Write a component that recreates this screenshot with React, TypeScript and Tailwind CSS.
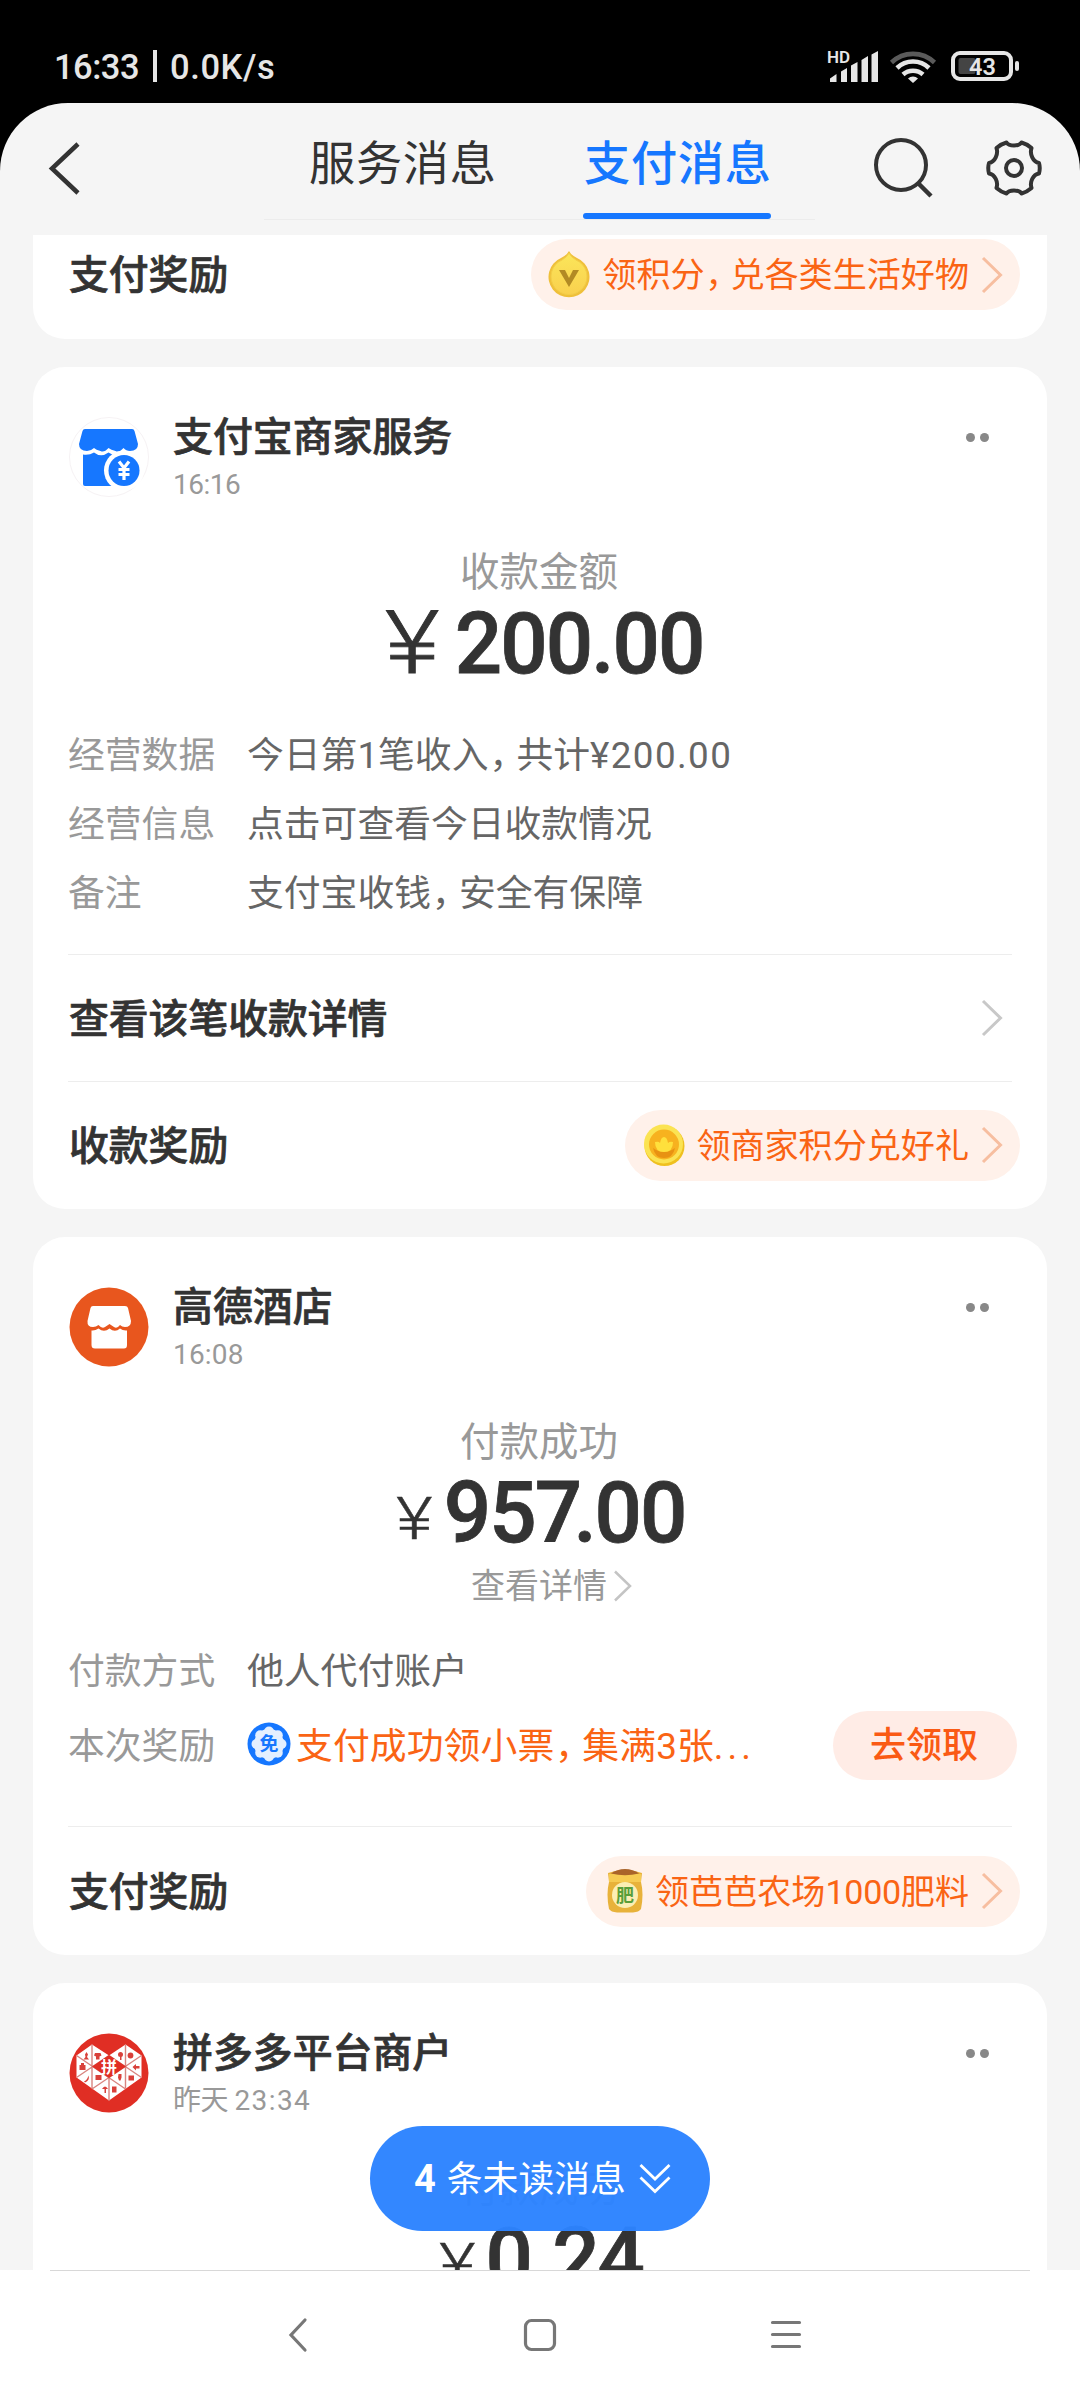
import type { ReactNode } from 'react'

// 全角逗号收窄一点
const Comma = () => <span className="pl-[0.02em] pr-[0.24em] [font-feature-settings:'halt']">，</span>

function StatusBar() {
  return (
    <div className="flex h-[103px] items-start justify-between bg-black pl-[54px] pr-[60px] text-[#e6e6e6]">
      <div className="mt-[47px] flex h-[40px] items-center text-[34.500px] font-medium leading-[40px]">
        <span className="w-[84px] tracking-[-0.500px]">16:33</span>
        <span className="-mt-[2px] ml-[15px] h-[32px] w-[4px] bg-[#e6e6e6]" />
        <span className="ml-[13px] tracking-[0.6px]">0.0K/s</span>
      </div>
      <div className="mt-[48px] flex items-start">
        <svg width="52" height="36" viewBox="0 0 52 36" fill="#e6e6e6">
          <text x="0" y="15" fontSize="17" fontWeight="600">HD</text>
          <path d="M3 34V30.500L9.500 26v8zM14 34V23.500L20 20v14zM24 34V17.500L30.500 14v20zM34.500 34V12L41 8v26zM44.500 34V6.500L51 3v31z" />
        </svg>
        <svg className="ml-[10px]" width="48" height="36" viewBox="0 0 48 36" fill="none" strokeWidth="4.600">
          <path d="M2.500 14.500a31 31 0 0 1 43 0" stroke="#5a5a5a" />
          <path d="M8 20a23 23 0 0 1 32 0M14 26.500a15 15 0 0 1 20 0" stroke="#e6e6e6" />
          <path d="M19 30.500a7.500 7.500 0 0 1 10 0L24 35z" fill="#e6e6e6" />
        </svg>
        <svg className="ml-[13px]" width="70" height="36" viewBox="0 0 70 36" fill="none">
          <rect x="3" y="5" width="58" height="26" rx="7" stroke="#e6e6e6" strokeWidth="4" />
          <rect x="8.500" y="10" width="17" height="16" rx="2" fill="#444" />
          <rect x="65" y="13" width="4" height="10" rx="2" fill="#e6e6e6" />
          <text x="19" y="26.500" fontSize="23.500" fontWeight="600" fill="#e6e6e6">43</text>
        </svg>
      </div>
    </div>
  )
}

function Header() {
  return (
    <div className="flex h-[132px] shrink-0 items-start">
      <svg className="ml-[44px] mt-[35px]" width="40" height="60" viewBox="0 0 40 60" fill="none" stroke="#333" strokeWidth="4.500">
        <path d="M34 6L8 30.500L34 55" />
      </svg>
      <div className="ml-[180px] mt-px flex h-[116px] w-[551px] justify-between border-b border-[#ececec] pl-[38px] pr-[44px] text-[46.200px]">
        <div className="w-[204px] pl-[7px] pt-[30px] leading-[60px] tracking-[0.700px] text-[#333]">服务消息</div>
        <div className="flex h-[115px] w-[188px] flex-col justify-between whitespace-nowrap pt-[30px] font-medium leading-[60px] text-[#1677ff]">
          <div className="pl-[1px] tracking-[0.700px]">支付消息</div>
          <div className="h-[6px] rounded-full bg-[#1677ff]" />
        </div>
      </div>
      <svg className="ml-[55px] mt-[33px]" width="68" height="68" viewBox="0 0 68 68" fill="none" stroke="#333" strokeWidth="4">
        <circle cx="31" cy="29" r="25" />
        <path d="M48 47L61 60" strokeWidth="4.500" />
      </svg>
      <svg className="ml-[46px] mt-[35px]" width="60" height="60" viewBox="0 0 60 60" fill="none" stroke="#333" strokeWidth="4" strokeLinejoin="round">
        <circle cx="30" cy="30" r="8" />
        <path d="M22.500 4.500C25 8.500 35 8.500 37.500 4.500Q43 6 47.500 10C45.500 16 49 24 55 25Q56.500 30 55 35.500C49 36.500 45.500 44 47.500 50Q43 54 37.500 55.500C35 51.500 25 51.500 22.500 55.500Q17 54 12.500 50C14.500 44 11 36.500 5 35.500Q3.500 30 5 25C11 24 14.500 16 12.500 10Q17 6 22.500 4.500z" />
      </svg>
    </div>
  )
}

function Arrow({ color }: { color: string }) {
  return (
    <svg width="22" height="38" viewBox="0 0 22 38" fill="none" stroke={color} strokeWidth="3">
      <path d="M2 2L19.500 19L2 36" />
    </svg>
  )
}

function CoinV() {
  return (
    <svg width="44" height="50" viewBox="0 0 44 50">
      <defs>
        <linearGradient id="coin-v" x1="0" y1="0" x2="0" y2="1">
          <stop offset="0" stopColor="#fbe65a" />
          <stop offset="1" stopColor="#f9d04e" />
        </linearGradient>
      </defs>
      <path d="M22 1Q24 5 30 8a20.500 20.500 0 1 1-16 0Q20 5 22 1z" fill="#efc03a" />
      <path d="M22 3Q24 7 29 10a18 18 0 1 1-14 0Q20 7 22 3z" fill="url(#coin-v)" stroke="#f3cd48" strokeWidth="1" />
      <path d="M12 20h6l4 8 4-8h6L22 37z" fill="#b28a24" />
    </svg>
  )
}

function CoinIngot() {
  return (
    <svg width="42" height="46" viewBox="0 0 42 46">
      <circle cx="21.500" cy="24" r="20" fill="#efc01f" />
      <circle cx="20.500" cy="22" r="19.500" fill="#fbe352" />
      <circle cx="21" cy="22.500" r="15" fill="#f7b21f" />
      <path d="M10 26q11 8 22 0q-2 10-11 10t-11-10z" fill="#e89212" />
      <path d="M12 20q4-1 5 1q1-6 4-6t4 6q2-2 5-1q0 10-9 10t-9-10z" fill="#ffe03c" />
    </svg>
  )
}

function Fertilizer() {
  return (
    <svg className="mr-px" width="36" height="46" viewBox="0 0 36 46">
      <path d="M1 5Q18-1 35 5L34 14Q37 26 34 41Q32 44 26 44.500H10Q4 44 2 41Q-1 26 2 14z" fill="#e8b23a" />
      <path d="M2 6H34V14H2z" fill="#f6cb52" />
      <path d="M4 5.500Q10 1 18 1T32 5.500Q18 9 4 5.500z" fill="#a9642a" />
      <circle cx="18" cy="27" r="13" fill="#fbeeb4" />
      <text x="18" y="34" fontSize="18" fontWeight="700" fill="#5a9e3a" textAnchor="middle">肥</text>
    </svg>
  )
}

function FreeBadge() {
  return (
    <svg className="-mt-[3px] shrink-0" width="44" height="44" viewBox="0 0 44 44">
      <circle cx="22" cy="22" r="21.500" fill="#1677ff" />
      <g fill="#e3efff">
        <circle cx="22" cy="22" r="15" />
        <circle cx="22" cy="9.500" r="5" />
        <circle cx="30.800" cy="13.200" r="5" />
        <circle cx="34.500" cy="22" r="5" />
        <circle cx="30.800" cy="30.800" r="5" />
        <circle cx="22" cy="34.500" r="5" />
        <circle cx="13.200" cy="30.800" r="5" />
        <circle cx="9.500" cy="22" r="5" />
        <circle cx="13.200" cy="13.200" r="5" />
      </g>
      <text x="22" y="29" fontSize="19" fontWeight="700" fill="#1677ff" textAnchor="middle">免</text>
    </svg>
  )
}

function ShopAvatar() {
  return (
    <svg width="80" height="80" viewBox="1 0 80 80">
      <circle cx="41" cy="40" r="39.500" fill="#fff" stroke="#f6f2f4" />
      <path d="M17 12H64Q66 12 66.500 14L70 27Q70 34 62 34Q58 34 55.500 31Q51 36 47.500 34Q43 33 40.500 31Q36 36 32.500 34Q28 33 26 31Q23 34 19 34Q11 34 11 27L14.500 14Q15 12 17 12z" fill="#1677ff" />
      <path d="M15 37.500Q21 38.500 26 35.500Q33 41 40.500 35.500Q47 40 52 37V69H17Q15 69 15 67z" fill="#1677ff" />
      <circle cx="56" cy="53.500" r="20" fill="#fff" />
      <circle cx="56" cy="53.500" r="15.500" fill="#1677ff" />
      <path d="M51 44.500L56 51L61 44.500M56 51V63M50.500 52.500H61.500M50.500 57.500H61.500" fill="none" stroke="#fff" strokeWidth="3.200" />
    </svg>
  )
}

function HotelAvatar() {
  return (
    <svg width="80" height="80" viewBox="0 0 80 80">
      <circle cx="40" cy="40" r="39.500" fill="#e8561e" />
      <path d="M24 19H56Q58.500 19 59 21L62 34Q62 40 56 40Q53 40 51 38Q48 42 45 40L40.500 37L36 40Q33 42 29.500 38Q27 40 24 40Q18 40 18.500 34L21.500 21Q22 19 24 19z" fill="#fff" />
      <path d="M22.500 43.500Q26 44 29.500 41.500Q35 46 40.500 41.500Q46 46 51 41.500Q54 44 58 43.500V58Q58 61.500 55 61.500H26Q22.500 61.500 22.500 58z" fill="#fff" />
    </svg>
  )
}

function PddAvatar() {
  return (
    <svg width="80" height="80" viewBox="0 0 80 80">
      <circle cx="40" cy="40" r="39.500" fill="#e02e24" />
      <path d="M7.500 22.500L23 11.500L40 22.500L56.500 11.500L72.500 22.500V44.500L40 67.500L7.500 44.500z" fill="#fff" />
      <path d="M23 11.500V55.500M56.500 11.500V55.500M40 44.500V67.500M7.500 22.500L56.500 56M72.500 22.500L23 56M7.500 44.500L40 22.500M72.500 44.500L40 22.500" fill="none" stroke="#d98580" strokeWidth="1.400" />
      <path d="M40 22L57 33.500L40 45L23 33.500z" fill="#e02e24" />
      <text x="40" y="39.500" fontSize="16" fontWeight="700" fill="#fff" textAnchor="middle">拼</text>
      {/* 小商品图案 */}
      <g fill="#d9403a">
        <path d="M17.500 19l1.500 2.500-1 2.500 2 2.500h-5.500l2-2.500-.5-2.500zM26 20h5.500l1 2.500-2 1v3h-3.500v-3l-2-1z" />
        <path d="M10.500 32h6v5h-6zM12 30h3v3h-3zM26.500 42h6v5h-6z" />
        <path d="M15 48.500q3-1 4.500-6q1.500 5-3.500 7zM33 56q3-5 6 0zM35.500 55h1.500v5h-1.500z" />
        <circle cx="51.500" cy="21.500" r="2.500" />
        <circle cx="61.500" cy="22.500" r="2.900" />
        <path d="M51 22h1.500v5H51zM63.500 34l3.500-3v2h3.500v2.500h-3.500v2zM49.500 41h3v3.500l-1 3h-1.500l-1-3zM59.500 42.500h5.500v5h-5.500zM43 53.500h4.500v6H43z" />
      </g>
    </svg>
  )
}

function RewardPill({ icon, children, width }: { icon: ReactNode; children: ReactNode; width: string }) {
  return (
    <div className={`-mr-2 flex h-[71px] items-center justify-end rounded-full bg-[#fff1ea] pr-[17px] ${width}`}>
      {icon}
      <span className="ml-[11px] mr-[12px] whitespace-nowrap pt-px text-[34.100px] leading-[48px] text-[#fa6414]">{children}</span>
      <Arrow color="#f7bea0" />
    </div>
  )
}

function RewardTitle({ children }: { children: ReactNode }) {
  return (
    <div className="pl-px pt-[3px] text-[39.800px] font-medium leading-[48px] text-[#333] [-webkit-text-stroke:0.7px_#333]">{children}</div>
  )
}

function CardHead({ avatar, name, time }: { avatar: ReactNode; name: string; time: ReactNode }) {
  return (
    <div className="flex h-[80px] pl-px">
      {avatar}
      <div className="ml-[24px] flex flex-1 flex-col">
        <div className="text-[39.900px] font-medium leading-[42px] text-[#333] [-webkit-text-stroke:0.7px_#333]">{name}</div>
        <div className="mt-[12px] text-[28px] leading-[28px] tracking-[-0.500px] text-[#999]">{time}</div>
      </div>
      <div className="mr-[23px] mt-[16px] flex gap-[5px]">
        <span className="size-[9px] rounded-full bg-[#888]" />
        <span className="size-[9px] rounded-full bg-[#888]" />
      </div>
    </div>
  )
}

function Amount({ label, value, big }: { label: string; value: ReactNode; big?: boolean }) {
  return (
    <>
      <div className="mt-[56px] pr-[2px] text-center text-[39.500px] leading-[40px] text-[#999]">{label}</div>
      <div className={`mt-[10px] flex h-[80px] items-baseline justify-center leading-[80px] text-[#333] ${big ? 'pl-[21px]' : 'pl-[8px]'}`}>
        {big ? (
          <span className="mr-[11px] origin-right scale-x-[1.2] text-[88px] font-light [-webkit-text-stroke:0.8px_#333]">¥</span>
        ) : (
          <span className="relative -top-[3px] mr-[10px] scale-x-[1.17] text-[60px] font-light [-webkit-text-stroke:0.500px_#333]">¥</span>
        )}
        <span className="scale-x-[0.97] text-[86px] font-medium tracking-[-2px] [-webkit-text-stroke:0.800px_#333]">{value}</span>
      </div>
    </>
  )
}

function Row({ label, children }: { label: string; children: ReactNode }) {
  return (
    <div className="flex h-[69px] items-center pt-[2px] text-[36.800px] leading-[40px]">
      <div className="w-[179px] text-[#999]">{label}</div>
      <div className="text-[#666]">{children}</div>
    </div>
  )
}

const Line = () => <div className="h-px bg-[#ededed]" />

export default function App() {
  return (
    <div className="h-[2400px] w-[1080px] overflow-hidden bg-black font-['Roboto','Noto_Sans_CJK_SC',sans-serif]">
      <StatusBar />
      <div className="relative flex h-[2167px] flex-col overflow-hidden rounded-t-[68px] bg-[#f5f5f5]">
        <Header />
        <div className="flex flex-1 flex-col gap-[28px] overflow-hidden px-[33px]">
          <div className="h-[104px] shrink-0 rounded-b-[32px] bg-white px-[35px]">
            <div className="flex h-[79px] items-center justify-between">
              <RewardTitle>支付奖励</RewardTitle>
              <RewardPill width="w-[489px]" icon={<CoinV />}>领积分<Comma />兑各类生活好物</RewardPill>
            </div>
          </div>

          <div className="h-[842px] shrink-0 rounded-[32px] bg-white px-[35px] pt-[50px]">
            <CardHead avatar={<ShopAvatar />} name="支付宝商家服务" time="16:16" />
            <Amount label="收款金额" value="200.00" big />
            <div className="mb-[27px] mt-[37px]">
              <Row label="经营数据">今日第1笔收入<Comma />共计<span className="tracking-[1.400px]">¥200.00</span></Row>
              <Row label="经营信息">点击可查看今日收款情况</Row>
              <Row label="备注">支付宝收钱<Comma />安全有保障</Row>
            </div>
            <Line />
            <div className="flex h-[126px] items-center justify-between pr-[9px]">
              <RewardTitle>查看该笔收款详情</RewardTitle>
              <Arrow color="#c8c8c8" />
            </div>
            <Line />
            <div className="flex h-[126px] items-center justify-between">
              <RewardTitle>收款奖励</RewardTitle>
              <RewardPill width="w-[395px]" icon={<CoinIngot />}>领商家积分兑好礼</RewardPill>
            </div>
          </div>

          <div className="h-[718px] shrink-0 rounded-[32px] bg-white px-[35px] pt-[50px]">
            <CardHead avatar={<HotelAvatar />} name="高德酒店" time={<span className="tracking-[0.2px]">16:08</span>} />
            <Amount label="付款成功" value={<>95<span className="tracking-[-9px]">7</span>.00</>} />
            <div className="mt-[13px] flex h-[40px] items-center justify-center gap-[6px] pl-[24px] text-[34px] leading-[40px] text-[#999]">
              查看详情
              <svg width="20" height="32" viewBox="0 0 20 32" fill="none" stroke="#c4c4c4" strokeWidth="2.500">
                <path d="M2 1.500L17 16L2 30.500" />
              </svg>
            </div>
            <div className="mb-[40px] mt-[30px]">
              <Row label="付款方式">他人代付账户</Row>
              <div className="flex h-[81px] items-center text-[36.800px] leading-[40px]">
                <div className="w-[179px] pt-[2px] text-[#999]">本次奖励</div>
                <FreeBadge />
                <div className="ml-[5px] flex-1 pt-[2px] tracking-[0.1px] text-[#fa6414]">
                  支付成功领小票<Comma />集满3张<span className="tracking-[4px]">...</span>
                </div>
                <div className="-mr-[5px] flex h-[69px] w-[184px] items-center justify-center rounded-full bg-[#ffece6] pr-[2px] text-[36px] font-medium text-[#fa5a14]">
                  去领取
                </div>
              </div>
            </div>
            <Line />
            <div className="flex h-[128px] items-center justify-between">
              <RewardTitle>支付奖励</RewardTitle>
              <RewardPill width="w-[434px]" icon={<Fertilizer />}>领芭芭农场<span className="tracking-[-0.3px]">1000</span>肥料</RewardPill>
            </div>
          </div>

          <div className="h-[719px] shrink-0 rounded-[32px] bg-white px-[35px] pt-[50px]">
            <CardHead avatar={<PddAvatar />} name="拼多多平台商户" time={<>昨天 <span className="tracking-[1.400px]">23:34</span></>} />
            <Amount label="付款成功" value="0.24" />
          </div>
        </div>

        {/* 未读消息悬浮按钮 */}
        <div className="absolute left-[370px] top-[2023px] flex h-[105px] w-[340px] items-center rounded-full bg-[#2c83ff]/97 pl-[44px] text-[35.800px] text-white">
          <span className="pt-[2px] text-[38px] font-bold">4</span>
          <span className="ml-[11px] pt-[2px] leading-[48px]">条未读消息</span>
          <svg className="ml-[12px]" width="34" height="32" viewBox="0 0 34 32" fill="none" stroke="#fff" strokeWidth="2.800">
            <path d="M2.500 2L17 16L31.500 2M2.500 14.500L17 28.500L31.500 14.500" />
          </svg>
        </div>
      </div>

      <div className="flex h-[130px] flex-col bg-white">
        <div className="mx-[50px] h-px bg-[#d8d8d8]" />
        <svg className="mt-[38px]" width="1080" height="50" viewBox="0 0 1080 50" fill="none" stroke="#777" strokeWidth="3.200" strokeLinecap="round">
          <path d="M305 11L291 26L305 41" />
          <rect x="525.500" y="11.500" width="29" height="29" rx="6" />
          <path d="M772.500 13.500H799.500M772.500 25.500H799.500M772.500 37.500H799.500" />
        </svg>
      </div>
    </div>
  )
}
